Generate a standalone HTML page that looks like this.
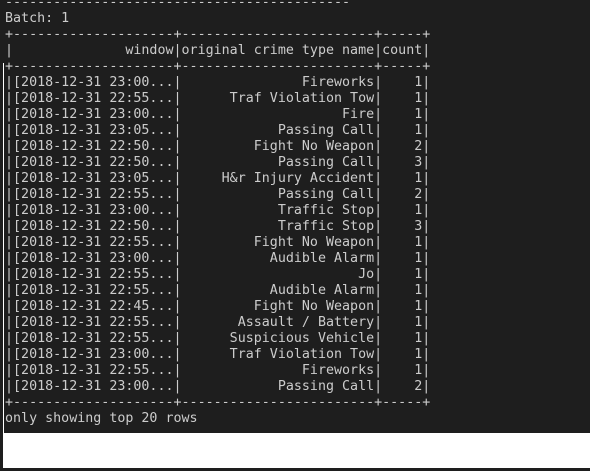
<!DOCTYPE html>
<html><head><style>
html,body{margin:0;padding:0;width:590px;height:471px;overflow:hidden;background:#1e1e1e;}
#w{position:absolute;left:3px;top:63px;width:1px;height:405px;background:#fff;}
#b{position:absolute;left:3px;top:433px;width:587px;height:35px;background:#fff;}
pre{position:absolute;left:5px;top:-5px;margin:0;font-family:"DejaVu Sans Mono","Liberation Mono",monospace;font-size:13.33px;line-height:16px;color:#cccccc;}
</style></head><body>
<div id="w"></div><div id="b"></div>
<pre>-------------------------------------------
Batch: 1
+--------------------+------------------------+-----+
|              window|original crime type name|count|
+--------------------+------------------------+-----+
|[2018-12-31 23:00...|               Fireworks|    1|
|[2018-12-31 22:55...|      Traf Violation Tow|    1|
|[2018-12-31 23:00...|                    Fire|    1|
|[2018-12-31 23:05...|            Passing Call|    1|
|[2018-12-31 22:50...|         Fight No Weapon|    2|
|[2018-12-31 22:50...|            Passing Call|    3|
|[2018-12-31 23:05...|     H&amp;r Injury Accident|    1|
|[2018-12-31 22:55...|            Passing Call|    2|
|[2018-12-31 23:00...|            Traffic Stop|    1|
|[2018-12-31 22:50...|            Traffic Stop|    3|
|[2018-12-31 22:55...|         Fight No Weapon|    1|
|[2018-12-31 23:00...|           Audible Alarm|    1|
|[2018-12-31 22:55...|                      Jo|    1|
|[2018-12-31 22:55...|           Audible Alarm|    1|
|[2018-12-31 22:45...|         Fight No Weapon|    1|
|[2018-12-31 22:55...|       Assault / Battery|    1|
|[2018-12-31 22:55...|      Suspicious Vehicle|    1|
|[2018-12-31 23:00...|      Traf Violation Tow|    1|
|[2018-12-31 22:55...|               Fireworks|    1|
|[2018-12-31 23:00...|            Passing Call|    2|
+--------------------+------------------------+-----+
only showing top 20 rows</pre>
</body></html>
